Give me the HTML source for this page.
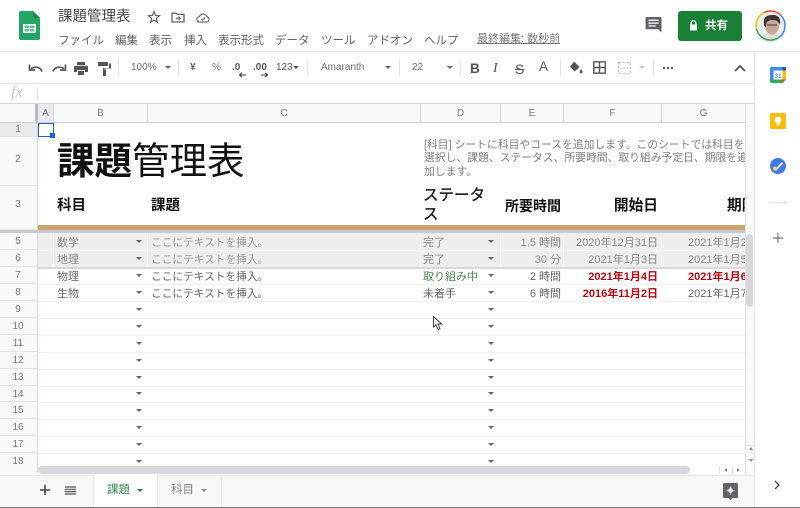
<!DOCTYPE html>
<html lang="ja"><head><meta charset="utf-8"><title>課題管理表</title>
<style>
html,body{margin:0;padding:0;width:800px;height:508px;overflow:hidden;background:#fff}
body{position:relative;font-family:"Liberation Sans","Noto Sans CJK JP",sans-serif;color:#3c4043}
.a{position:absolute;white-space:nowrap}
.b{position:absolute}
.m{top:33px;font-size:11.5px;line-height:16px;color:#5f6368}
.t{top:60px;font-size:10px;line-height:16px;color:#6b6f73}
.i{position:absolute;overflow:visible}
.sep{position:absolute;top:59px;width:1px;height:17px;background:#e2e3e5}
.ch{position:absolute;top:104px;height:18px;line-height:19px;font-size:10px;color:#777;text-align:center;background:#f8f9fa;border-right:1px solid #d5d5d5;box-sizing:border-box}
.rh{position:absolute;left:0;width:37px;text-align:center;font-size:10px;color:#777;background:#f8f9fa;border-bottom:1px solid #e4e4e4;box-sizing:border-box;padding-right:1px}
.c{position:absolute;font-size:11px;line-height:17px;color:#666;white-space:nowrap}
.n{font-size:10.7px}
.r{text-align:right}
.red{color:#b5080f;font-weight:bold}
.tri{position:absolute;width:0;height:0;margin-top:-1px;border-left:3.5px solid transparent;border-right:3.5px solid transparent;border-top:3.5px solid #666}
.line{position:absolute;left:38px;width:707px;height:1px;background:#f1f1f1}
.h{position:absolute;font-weight:bold;color:#111;font-size:14px;white-space:nowrap}
</style></head><body>

<!-- header -->
<svg class="i" style="left:19px;top:11px" width="21" height="29" viewBox="0 0 21 29"><path d="M2 0H14L21 7V27a2 2 0 0 1-2 2H2a2 2 0 0 1-2-2V2a2 2 0 0 1 2-2z" fill="#23a566"/><path d="M14 0L21 7H16a2 2 0 0 1-2-2z" fill="#1a8a52"/><path d="M4 13H17V22H4Z" fill="#fff"/><path d="M5.500 14.500H10V17H5.500ZM11 14.500H15.500V17H11ZM5.500 18H10V20.500H5.500ZM11 18H15.500V20.500H11Z" fill="#5fbf90"/></svg>
<div class="a" style="left:58px;top:7px;font-size:14.500px;line-height:20px;color:#444746">課題管理表</div>
<svg class="i" style="left:147px;top:10px" width="14" height="14" viewBox="0 0 14 14"><path d="M7 1.500L8.500 5.400L12.500 5.700L9.400 8.300L10.400 12.300L7 10.100L3.600 12.300L4.600 8.300L1.500 5.700L5.500 5.400Z" fill="none" stroke="#5f6368" stroke-width="1.200"/></svg>
<svg class="i" style="left:171px;top:11px" width="14" height="12" viewBox="0 0 14 12"><path d="M1 2.200H5L6.200 3.400H13V11H1Z" fill="none" stroke="#5f6368" stroke-width="1.300"/><path d="M5 7.200H9M7.500 5.500L9.300 7.200L7.500 8.900" fill="none" stroke="#5f6368" stroke-width="1.100"/></svg>
<svg class="i" style="left:196px;top:13px" width="14" height="10" viewBox="0 0 15 11"><path d="M4 10H11.500A3 3 0 0 0 12 4.200A4.500 4.500 0 0 0 3.500 4A3 3 0 0 0 4 10Z" fill="none" stroke="#5f6368" stroke-width="1.200"/><path d="M5.500 6.500L7 8L9.800 5" fill="none" stroke="#5f6368" stroke-width="1"/></svg>
<div class="a m" style="left:58px">ファイル</div>
<div class="a m" style="left:115px">編集</div>
<div class="a m" style="left:149px">表示</div>
<div class="a m" style="left:184px">挿入</div>
<div class="a m" style="left:218px">表示形式</div>
<div class="a m" style="left:275px">データ</div>
<div class="a m" style="left:321px">ツール</div>
<div class="a m" style="left:367px">アドオン</div>
<div class="a m" style="left:424px">ヘルプ</div>
<div class="a m" style="left:477px;top:31px;font-size:11px;color:#777;text-decoration:underline">最終編集: 数秒前</div>
<svg class="i" style="left:645px;top:17px" width="17" height="16" viewBox="0 0 17 17"><path d="M1.500 0H15.500A1.500 1.500 0 0 1 17 1.500V16.500L13.500 13H1.500A1.500 1.500 0 0 1 0 11.500V1.500A1.500 1.500 0 0 1 1.500 0Z" fill="#5f6368"/><path d="M3 3.500H14M3 6.500H14M3 9.500H11" stroke="#fff" stroke-width="1.300"/></svg>
<div class="b" style="left:678px;top:11px;width:64px;height:30px;background:#1a7f37;border-radius:3px"></div>
<svg class="i" style="left:688px;top:20px" width="11" height="11" viewBox="0 0 11 11"><path d="M3.200 4.500V3A2.300 2.300 0 0 1 7.800 3V4.500" fill="none" stroke="#fff" stroke-width="1.200"/><path d="M2 4.500H9V10.500H2Z" fill="#fff"/></svg>
<div class="a" style="left:705px;top:18px;font-size:11.500px;line-height:17px;font-weight:bold;color:#fff">共有</div>
<svg class="i" style="left:754px;top:9px" width="33" height="33" viewBox="0 0 33 33"><circle cx="16.500" cy="16.500" r="14.500" fill="#eceded"/><path d="M6 29C9 24 14 24 17 24C22 24 26 25 28 27A14 14 0 0 1 6 29Z" fill="#e3e0dc"/><ellipse cx="18" cy="17" rx="7" ry="8.500" fill="#c9a797"/><path d="M10 15C9 7 14 6 19 6C25 6 27 10 26 16C24 11 21 11 17 11C13 12 12 13 12 18C11 18 10 17 10 15Z" fill="#3a3634"/><path d="M13 16H23" stroke="#554" stroke-width="1.300"/><path d="M2.500 20A14.500 14.500 0 0 1 10 3.500" fill="none" stroke="#fbbc04" stroke-width="1.500"/><path d="M10 3.500A14.500 14.500 0 0 1 27 6.500" fill="none" stroke="#ea4335" stroke-width="1.500"/><path d="M27 6.500A14.500 14.500 0 0 1 24 29" fill="none" stroke="#4285f4" stroke-width="1.500"/><path d="M24 29A14.500 14.500 0 0 1 2.500 20" fill="none" stroke="#34a853" stroke-width="1.500"/></svg>

<!-- toolbar -->
<div class="b" style="left:0;top:51px;width:800px;height:1px;background:#e3e4e6"></div>
<div class="b" style="left:0;top:83px;width:755px;height:1px;background:#e3e4e6"></div>
<svg class="i" style="left:28px;top:63px" width="15" height="10" viewBox="0 0 15 10"><path d="M14 8.500C12.500 4.500 7.500 2.800 3 5.500M1.500 1.500V7H7" fill="none" stroke="#555" stroke-width="1.700"/></svg>
<svg class="i" style="left:52px;top:63px" width="15" height="10" viewBox="0 0 15 10"><path d="M1 8.500C2.500 4.500 7.500 2.800 12 5.500M13.500 1.500V7H8" fill="none" stroke="#555" stroke-width="1.700"/></svg>
<svg class="i" style="left:74px;top:62px" width="14" height="13" viewBox="0 0 14 13"><path d="M3 0H11V3H3ZM1.500 3.800H12.500A1.500 1.500 0 0 1 14 5.300V10H11V8H3V10H0V5.300A1.500 1.500 0 0 1 1.500 3.800ZM4 9H10V13H4Z" fill="#555"/></svg>
<svg class="i" style="left:98px;top:62px" width="13" height="14" viewBox="0 0 13 14"><path d="M0 0H10V4H0ZM10.800 1.500H13V6.500H6.500V8H8V14H5V6H11V1.500Z" fill="#555"/></svg>
<div class="sep" style="left:118px"></div>
<div class="a t" style="left:131px">100%</div><div class="tri" style="left:165px;top:67px"></div>
<div class="sep" style="left:178px"></div>
<div class="a t" style="left:190px;font-weight:bold;color:#666">¥</div>
<div class="a t" style="left:212px">%</div>
<div class="a t" style="left:232px;font-weight:bold;color:#555">.0</div>
<svg class="i" style="left:238px;top:72px" width="8" height="6" viewBox="0 0 8 6"><path d="M8 3H2M4 .8L1.500 3L4 5.200" fill="none" stroke="#444" stroke-width="1.100"/></svg>
<div class="a t" style="left:253px;font-weight:bold;color:#555">.00</div>
<svg class="i" style="left:261px;top:72px" width="8" height="6" viewBox="0 0 8 6"><path d="M0 3H6M4 .8L6.500 3L4 5.200" fill="none" stroke="#444" stroke-width="1.100"/></svg>
<div class="a t" style="left:276px;color:#555">123</div><div class="tri" style="left:293px;top:67px;border-top-color:#555"></div>
<div class="sep" style="left:307px"></div>
<div class="a t" style="left:321px">Amaranth</div><div class="tri" style="left:385px;top:67px"></div>
<div class="sep" style="left:399px"></div>
<div class="a t" style="left:412px">22</div><div class="tri" style="left:447px;top:67px"></div>
<div class="sep" style="left:460px"></div>
<div class="a" style="left:470px;top:60px;font-size:13.500px;line-height:18px;font-weight:bold;color:#555">B</div>
<div class="a" style="left:493px;top:60px;font-size:14px;line-height:18px;font-style:italic;font-family:'Liberation Serif',serif;color:#555">I</div>
<div class="a" style="left:515px;top:60px;font-size:14px;line-height:18px;color:#555;text-decoration:line-through">S</div>
<div class="a" style="left:539px;top:58px;font-size:13.500px;line-height:18px;color:#555">A</div>
<div class="sep" style="left:560px"></div>
<svg class="i" style="left:569px;top:61px" width="14" height="13" viewBox="0 0 14 13"><path d="M5 .5L10.500 6L5.800 10.500L1 6Z" fill="#555"/><path d="M12 8C13 9.500 13.500 10 13.500 11A1.400 1.400 0 0 1 10.700 11C10.700 10 11 9.500 12 8Z" fill="#555"/></svg>
<svg class="i" style="left:593px;top:61px" width="13" height="13" viewBox="0 0 13 13"><path d="M.8.800H12.200V12.200H.8ZM6.500.8V12.200M.8 6.500H12.200" fill="none" stroke="#555" stroke-width="1.400"/></svg>
<svg class="i" style="left:618px;top:62px" width="13" height="12" viewBox="0 0 13 12"><path d="M.5 .5H12.500V11.500H.5ZM.5 6H12.500" fill="none" stroke="#bdbdbd" stroke-width="1" stroke-dasharray="2.500 1.500"/></svg>
<div class="tri" style="left:639px;top:67px;border-top-color:#c4c4c4"></div>
<div class="sep" style="left:653px"></div>
<svg class="i" style="left:662px;top:66px" width="12" height="4" viewBox="0 0 12 4"><circle cx="2" cy="2" r="1.200" fill="#555"/><circle cx="6" cy="2" r="1.200" fill="#555"/><circle cx="10" cy="2" r="1.200" fill="#555"/></svg>
<svg class="i" style="left:734px;top:64px" width="12" height="8" viewBox="0 0 12 8"><path d="M1 7L6 2L11 7" fill="none" stroke="#555" stroke-width="1.800"/></svg>

<!-- formula bar -->
<div class="a" style="left:11px;top:83px;font-family:'Liberation Serif',serif;font-style:italic;font-size:16px;line-height:20px;color:#c4c4c4">fx</div>
<div class="b" style="left:37px;top:87px;width:1px;height:13px;background:#ddd"></div>
<div class="b" style="left:0;top:103px;width:755px;height:1px;background:#d5d5d5"></div>

<!-- grid headers -->
<div class="b" style="left:0;top:104px;width:745px;height:18px;background:#f8f9fa"></div>
<div class="b" style="left:35px;top:104px;width:3px;height:19px;background:#b9bbbe"></div>
<div class="ch" style="left:38px;width:16px;background:#e8eaed">A</div>
<div class="ch" style="left:54px;width:94px">B</div>
<div class="ch" style="left:148px;width:273px">C</div>
<div class="ch" style="left:421px;width:80px">D</div>
<div class="ch" style="left:501px;width:63px">E</div>
<div class="ch" style="left:564px;width:98px">F</div>
<div class="ch" style="left:662px;width:83px;border-right:0">G</div>
<div class="b" style="left:0;top:122px;width:745px;height:1px;background:#cfcfcf"></div>

<!-- row headers -->
<div class="rh" style="top:123px;height:14px;line-height:13px;background:#e8eaed">1</div>
<div class="rh" style="top:137px;height:49px;line-height:45px">2</div>
<div class="rh" style="top:186px;height:44px;line-height:38px">3</div>
<div class="rh" style="top:233px;height:17px;line-height:18px">5</div>
<div class="rh" style="top:250px;height:17px;line-height:17px">6</div>
<div class="rh" style="top:267px;height:17px;line-height:17px">7</div>
<div class="rh" style="top:284px;height:17px;line-height:18px">8</div>
<div class="rh" style="top:301px;height:17px;line-height:17px">9</div>
<div class="rh" style="top:318px;height:17px;line-height:17px">10</div>
<div class="rh" style="top:335px;height:17px;line-height:17px">11</div>
<div class="rh" style="top:352px;height:17px;line-height:17px">12</div>
<div class="rh" style="top:369px;height:17px;line-height:17px">13</div>
<div class="rh" style="top:386px;height:16px;line-height:17px">14</div>
<div class="rh" style="top:402px;height:17px;line-height:17px">15</div>
<div class="rh" style="top:419px;height:17px;line-height:17px">16</div>
<div class="rh" style="top:436px;height:17px;line-height:17px">17</div>
<div class="rh" style="top:453px;height:20px;line-height:17px;border-bottom:0">18</div>
<div class="b" style="left:37px;top:123px;width:1px;height:350px;background:#d8d8d8"></div>

<!-- selection -->
<div class="b" style="left:38px;top:123px;width:14px;height:12px;border:1px solid #1a5fd0"></div>
<div class="b" style="left:50px;top:133px;width:5px;height:5px;background:#1a66e0"></div>

<!-- title -->
<div class="a" style="left:57px;top:139px;font-size:37.500px;line-height:44px;color:#111"><b>課題</b>管理表</div>
<div class="b" style="left:424px;top:138.500px;width:321px;height:42px;overflow:hidden;font-size:10.800px;line-height:13.500px;color:#7d7d7d;white-space:nowrap">[科目] シートに科目やコースを追加します。このシートでは科目を<br>選択し、課題、ステータス、所要時間、取り組み予定日、期限を追<br>加します。</div>

<!-- headers row 3 -->
<div class="h" style="left:57px;top:196px;line-height:20px;font-size:14.500px">科目</div>
<div class="h" style="left:151px;top:196px;line-height:20px;font-size:14.500px">課題</div>
<div class="h" style="left:423px;top:186px;line-height:19px;font-size:15.500px;font-weight:normal;-webkit-text-stroke:.3px #111">ステータ<br>ス</div>
<div class="h r" style="left:500px;width:61px;top:196px;line-height:20px;font-size:14px">所要時間</div>
<div class="h r" style="left:563px;width:95px;top:196px;line-height:20px;font-size:14.700px">開始日</div>
<div class="b" style="left:662px;top:196px;width:83px;height:22px;overflow:hidden"><div class="h" style="left:65px;top:0;line-height:20px;font-size:14.700px">期限</div></div>

<!-- brown bar & freeze -->
<div class="b" style="left:38px;top:225px;width:707px;height:5px;background:#cba470"></div>
<div class="b" style="left:0;top:230px;width:755px;height:3px;background:#c9cbce"></div>

<!-- shaded rows -->
<div class="b" style="left:38px;top:233px;width:707px;height:34px;background:#eeeeee"></div>
<div class="b" style="left:38px;top:250px;width:707px;height:1px;background:#f7f7f7"></div>
<div class="b" style="left:38px;top:267px;width:707px;height:2px;background:#d9d9d9"></div>
<div class="b" style="left:53px;top:233px;width:1px;height:34px;background:#f7f7f7"></div>
<div class="b" style="left:147px;top:233px;width:1px;height:34px;background:#f7f7f7"></div>
<div class="b" style="left:420px;top:233px;width:1px;height:34px;background:#f7f7f7"></div>
<div class="b" style="left:500px;top:233px;width:1px;height:34px;background:#f7f7f7"></div>
<div class="b" style="left:563px;top:233px;width:1px;height:34px;background:#f7f7f7"></div>
<div class="b" style="left:661px;top:233px;width:1px;height:34px;background:#f7f7f7"></div>

<!-- row lines -->
<div class="line" style="top:284px"></div><div class="line" style="top:301px"></div><div class="line" style="top:318px"></div><div class="line" style="top:335px"></div><div class="line" style="top:352px"></div><div class="line" style="top:369px"></div><div class="line" style="top:386px"></div><div class="line" style="top:402px"></div><div class="line" style="top:419px"></div><div class="line" style="top:436px"></div><div class="line" style="top:453px"></div>

<!-- cells -->
<div class="c" style="left:57px;top:235px;color:#888">数学</div>
<div class="c" style="left:57px;top:252px;color:#888">地理</div>
<div class="c" style="left:57px;top:269px">物理</div>
<div class="c" style="left:57px;top:286px">生物</div>
<div class="c n" style="left:151px;top:235px;color:#999">ここにテキストを挿入。</div>
<div class="c n" style="left:151px;top:252px;color:#999">ここにテキストを挿入。</div>
<div class="c n" style="left:151px;top:269px">ここにテキストを挿入。</div>
<div class="c n" style="left:151px;top:286px">ここにテキストを挿入。</div>
<div class="c" style="left:423px;top:235px;color:#888">完了</div>
<div class="c" style="left:423px;top:252px;color:#888">完了</div>
<div class="c" style="left:423px;top:269px;color:#4f8a4f">取り組み中</div>
<div class="c" style="left:423px;top:286px">未着手</div>
<div class="c r" style="left:500px;width:61px;top:235px;color:#888">1.5 時間</div>
<div class="c r" style="left:500px;width:61px;top:252px;color:#888">30 分</div>
<div class="c r" style="left:500px;width:61px;top:269px">2 時間</div>
<div class="c r" style="left:500px;width:61px;top:286px">6 時間</div>
<div class="c r" style="left:563px;width:95px;top:235px;color:#888">2020年12月31日</div>
<div class="c r" style="left:563px;width:95px;top:252px;color:#888">2021年1月3日</div>
<div class="c r red" style="left:563px;width:95px;top:269px">2021年1月4日</div>
<div class="c r red" style="left:563px;width:95px;top:286px">2016年11月2日</div>
<div class="b" style="left:662px;top:233px;width:83px;height:70px;overflow:hidden">
<div class="c" style="left:26px;top:2px;color:#888">2021年1月2日</div>
<div class="c" style="left:26px;top:19px;color:#888">2021年1月5日</div>
<div class="c red" style="left:26px;top:36px">2021年1月6日</div>
<div class="c" style="left:26px;top:53px">2021年1月7日</div>
</div>

<!-- dropdown triangles -->
<div class="tri" style="left:136px;top:241px"></div><div class="tri" style="left:136px;top:258px"></div><div class="tri" style="left:136px;top:275px"></div><div class="tri" style="left:136px;top:292px"></div><div class="tri" style="left:136px;top:309px"></div><div class="tri" style="left:136px;top:326px"></div><div class="tri" style="left:136px;top:343px"></div><div class="tri" style="left:136px;top:360px"></div><div class="tri" style="left:136px;top:377px"></div><div class="tri" style="left:136px;top:393px"></div><div class="tri" style="left:136px;top:410px"></div><div class="tri" style="left:136px;top:427px"></div><div class="tri" style="left:136px;top:444px"></div><div class="tri" style="left:136px;top:461px"></div>
<div class="tri" style="left:488px;top:241px"></div><div class="tri" style="left:488px;top:258px"></div><div class="tri" style="left:488px;top:275px"></div><div class="tri" style="left:488px;top:292px"></div><div class="tri" style="left:488px;top:309px"></div><div class="tri" style="left:488px;top:326px"></div><div class="tri" style="left:488px;top:343px"></div><div class="tri" style="left:488px;top:360px"></div><div class="tri" style="left:488px;top:377px"></div><div class="tri" style="left:488px;top:393px"></div><div class="tri" style="left:488px;top:410px"></div><div class="tri" style="left:488px;top:427px"></div><div class="tri" style="left:488px;top:444px"></div><div class="tri" style="left:488px;top:461px"></div>

<!-- cursor -->
<svg class="i" style="left:433px;top:316px" width="10" height="15" viewBox="0 0 10 15"><path d="M.5.500V11L3 8.800L5 13.500L7 12.700L5 8H8.800Z" fill="#fff" stroke="#333" stroke-width=".9"/></svg>

<!-- scrollbars -->
<div class="b" style="left:745px;top:104px;width:10px;height:370px;background:#f8f9fa;border-left:1px solid #e3e3e3;box-sizing:border-box"></div>
<div class="b" style="left:746px;top:234px;width:7px;height:73px;background:#d6d8db;border-radius:4px"></div>
<div class="b" style="left:745px;top:445px;width:10px;height:1px;background:#e0e0e0"></div>
<div class="b" style="left:745px;top:459px;width:10px;height:1px;background:#e0e0e0"></div>
<div class="b" style="left:748.500px;top:447px;width:0;height:0;border-left:2.500px solid transparent;border-right:2.500px solid transparent;border-bottom:3px solid #888"></div>
<div class="b" style="left:748.500px;top:459px;width:0;height:0;border-left:2.500px solid transparent;border-right:2.500px solid transparent;border-top:3px solid #888"></div>
<div class="b" style="left:38px;top:466px;width:652px;height:8px;background:#d6d8db;border-radius:4px"></div>
<div class="b" style="left:719px;top:466px;width:1px;height:8px;background:#e3e3e3"></div>
<div class="b" style="left:732px;top:466px;width:1px;height:8px;background:#e3e3e3"></div>
<div class="b" style="left:724px;top:468px;width:0;height:0;border-top:2.500px solid transparent;border-bottom:2.500px solid transparent;border-right:3px solid #888"></div>
<div class="b" style="left:737px;top:468px;width:0;height:0;border-top:2.500px solid transparent;border-bottom:2.500px solid transparent;border-left:3px solid #888"></div>

<!-- tab bar -->
<div class="b" style="left:0;top:475px;width:755px;height:32px;background:#f7f8f8;border-top:1px solid #e6e6e6;box-sizing:border-box"></div>
<svg class="i" style="left:40px;top:485px" width="10" height="10" viewBox="0 0 10 10"><path d="M5 0V10M0 5H10" stroke="#444" stroke-width="1.600"/></svg>
<svg class="i" style="left:65px;top:486px" width="11" height="9" viewBox="0 0 11 9"><path d="M0 1H11M0 3.300H11M0 5.600H11M0 8H11" stroke="#555" stroke-width="1.200"/></svg>
<div class="b" style="left:93px;top:474px;width:65px;height:33px;background:#fff;border-left:1px solid #e8e8e8;border-right:1px solid #e8e8e8;box-sizing:border-box"></div>
<div class="a" style="left:107px;top:482px;font-size:11.500px;line-height:16px;color:#3f8a55">課題</div>
<div class="tri" style="left:137px;top:490px;border-top-color:#1e7a3c"></div>
<div class="b" style="left:158px;top:475px;width:64px;height:32px;border-right:1px solid #e8e8e8;box-sizing:border-box"></div>
<div class="a" style="left:171px;top:482px;font-size:11.500px;line-height:16px;color:#888">科目</div>
<div class="tri" style="left:201px;top:490px;border-top-color:#888"></div>
<svg class="i" style="left:723px;top:483px" width="15" height="17" viewBox="0 0 15 17"><path d="M1.500 0H13.500A1.500 1.500 0 0 1 15 1.500V13.500A1.500 1.500 0 0 1 13.500 15H9.500L7.500 17L5.500 15H1.500A1.500 1.500 0 0 1 0 13.500V1.500A1.500 1.500 0 0 1 1.500 0Z" fill="#5f6368"/><path d="M7.500 3L8.800 6.200L12 7.500L8.800 8.800L7.500 12L6.200 8.800L3 7.500L6.200 6.200Z" fill="#fff"/></svg>
<div class="b" style="left:0;top:507px;width:800px;height:1px;background:#777"></div>

<!-- right side panel -->
<div class="b" style="left:754px;top:52px;width:1px;height:455px;background:#e3e4e6"></div>
<svg class="i" style="left:770px;top:67px" width="16" height="16" viewBox="0 0 16 16"><rect width="16" height="16" rx="1.500" fill="#fff"/><path d="M0 3.500V1.500A1.500 1.500 0 0 1 1.500 0H12.300V3.500Z" fill="#4285f4"/><path d="M0 3.500H3.500V12.500H0Z" fill="#4285f4"/><path d="M12.300 0H14.500A1.500 1.500 0 0 1 16 1.500V3.500H12.300Z" fill="#1a56c4"/><path d="M12.500 3.500H16V12.300H12.500Z" fill="#fbbc04"/><path d="M3.500 12.500H12.500V16H1.500A1.500 1.500 0 0 1 0 14.500V12.500H3.500Z" fill="#34a853"/><path d="M12.500 12.300H16L12.500 16Z" fill="#ea4335"/><text x="8" y="11" font-size="6.500" font-weight="bold" text-anchor="middle" fill="#4285f4" font-family="Liberation Sans">31</text></svg>
<svg class="i" style="left:770px;top:113px" width="16" height="16" viewBox="0 0 16 16"><rect width="16" height="16" rx="1.500" fill="#fbbc04"/><circle cx="8" cy="7" r="3.400" fill="#fff"/><rect x="6.500" y="10.500" width="3" height="2" fill="#fff"/></svg>
<svg class="i" style="left:770px;top:158px" width="16" height="16" viewBox="0 0 16 16"><circle cx="8" cy="8" r="8" fill="#3f7be6"/><path d="M3.800 9.500L6 11.500L12.500 4.800" fill="none" stroke="#fff" stroke-width="1.800"/><circle cx="5" cy="10.500" r="2" fill="#fbd475"/></svg>
<div class="b" style="left:769px;top:202px;width:18px;height:1px;background:#e0e0e0"></div>
<svg class="i" style="left:773px;top:233px" width="10" height="10" viewBox="0 0 10 10"><path d="M5 0V10M0 5H10" stroke="#777" stroke-width="1.200"/></svg>
<svg class="i" style="left:774px;top:480px" width="6" height="10" viewBox="0 0 6 10"><path d="M1 1L5 5L1 9" fill="none" stroke="#444" stroke-width="1.300"/></svg>
</body></html>
